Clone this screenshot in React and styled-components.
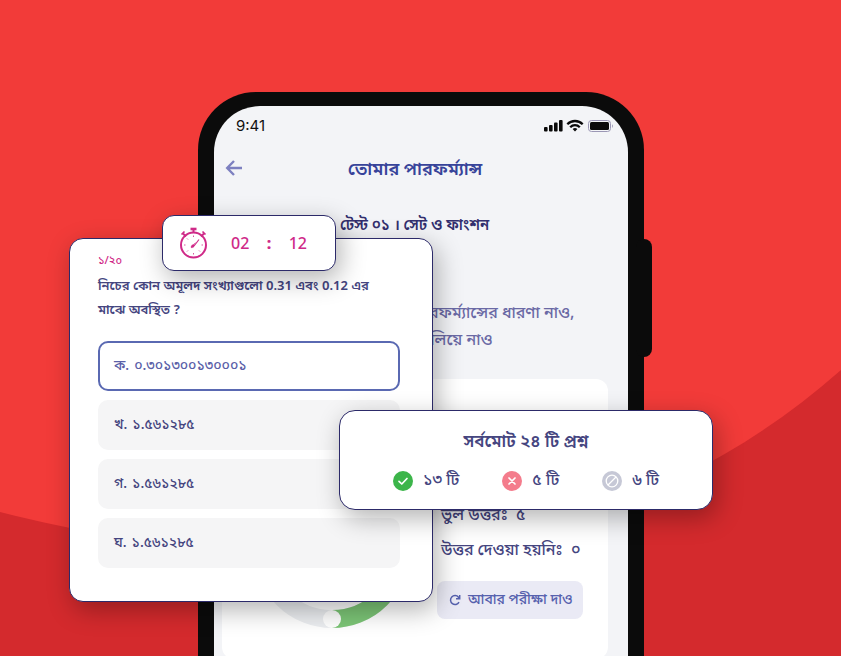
import React, { useState } from "react";
import styled, { createGlobalStyle } from "styled-components";

const GlobalStyle = createGlobalStyle`
  *, *::before, *::after { box-sizing: border-box; }
  body {
    margin: 0;
    font-family: "Noto Sans Bengali", "Hind Siliguri", "Noto Sans", sans-serif;
    color: #45457f;
  }
  h1, h2, p, ul, dl, dd, fieldset { margin: 0; padding: 0; border: 0; }
  button { font: inherit; border: 0; cursor: pointer; }
`;

const Scene = styled.main`
  position: relative;
  display: grid;
  grid-template-columns: minmax(0, 198fr) 446px minmax(0, 197fr);
  height: 100vh;
  overflow: hidden;
  background: #d42a2d;
`;

const Backdrop = styled.svg`
  position: absolute;
  inset: 0;
  width: 100%;
  height: 100%;
`;

const Stage = styled.div`
  position: relative;
  grid-column: 2;
  padding-top: 92px;
`;

const Phone = styled.section`
  position: relative;
  padding: 14px 16px 0;
  background: #0b0b0b;
  border-radius: 58px 58px 0 0;
`;

const SideKey = styled.span`
  position: absolute;
  top: 147px;
  right: -8px;
  width: 16px;
  height: 118px;
  border-radius: 8px;
  background: #0b0b0b;
`;

const Screen = styled.div`
  position: relative;
  display: flex;
  flex-direction: column;
  padding: 8px 20px 0 8px;
  min-height: 600px;
  background: #f3f4f7;
  border-radius: 46px 46px 0 0;
`;

const StatusBar = styled.div`
  display: flex;
  align-items: center;
  gap: 5px;
  height: 24px;
  padding-left: 14px;
  margin-right: -6px;
  color: #111;
  font: 15px/24px Inter, "Noto Sans", sans-serif;
  svg { display: block; }
`;

const Clock = styled.time`
  flex: 1;
`;

const TitleBar = styled.header`
  display: grid;
  grid-template-columns: 24px 1fr 24px;
  align-items: center;
  margin-top: 12px;
  height: 32px;
`;

const BackButton = styled.button`
  display: grid;
  place-items: center;
  padding: 0;
  width: 24px;
  height: 24px;
  background: none;
  color: #7d80c0;
`;

const Title = styled.h1`
  padding-top: 4px;
  text-align: center;
  font-size: 18px;
  line-height: 32px;
  font-weight: 600;
  color: #37439a;
  white-space: nowrap;
`;

const TestName = styled.h2`
  margin: 28px 0 0 118px;
  font-size: 15px;
  line-height: 32px;
  font-weight: 600;
  color: #322f6e;
  white-space: nowrap;
`;

const Advice = styled.p`
  display: flex;
  flex-direction: column;
  margin: 59px 0 0 191px;
  font-size: 16px;
  line-height: 27px;
  font-weight: 500;
  color: #6a69a5;
  white-space: nowrap;
`;

const ResultCard = styled.section`
  display: grid;
  grid-template-columns: 1fr 171px;
  margin-top: 24px;
  height: 280px;
  padding-top: 93px;
  border-radius: 12px;
  background: #fff;
`;

const Donut = styled.svg`
  display: block;
  margin-left: 32px;
`;

const Facts = styled.div`
  display: flex;
  flex-direction: column;
  align-items: flex-start;
  padding-top: 27px;
`;

const Fact = styled.p`
  margin-left: 4px;
  font-size: 16px;
  line-height: 35px;
  font-weight: 500;
  white-space: pre;
`;

const RetryButton = styled.button`
  display: flex;
  align-items: center;
  gap: 7px;
  height: 38px;
  margin-top: 12px;
  padding: 0 10px 0 12px;
  border-radius: 8px;
  background: #eaeaf5;
  color: #5661ae;
  font-size: 14px;
  font-weight: 500;
  white-space: nowrap;
`;

const FloatingCard = styled.section`
  position: absolute;
  border: 1px solid #2c2a69;
  background: #fff;
  box-shadow: 4px 8px 26px rgba(0, 0, 0, 0.3);
`;

const QuestionCard = styled(FloatingCard)`
  top: 238px;
  left: -129px;
  width: 364px;
  padding: 12px 32px 33px 28px;
  border-radius: 14px;
`;

const Progress = styled.p`
  font-size: 11px;
  line-height: 20px;
  font-weight: 500;
  color: #cf2a88;
`;

const Question = styled.legend`
  padding: 4px 20px 0 0;
  font-size: 13px;
  line-height: 24px;
  font-weight: 600;
`;

const Options = styled.div`
  display: flex;
  flex-direction: column;
  gap: 9px;
  margin-top: 18px;
`;

const Option = styled.label`
  display: flex;
  align-items: center;
  gap: 5px;
  height: 50px;
  padding: 1px 14px 0;
  border: 2px solid #f5f5f6;
  border-radius: 10px;
  background: #f5f5f6;
  font-size: 14px;
  font-weight: 500;
  cursor: pointer;

  &:has(input:checked) {
    border-color: #5a69b2;
    background: #fff;
    color: #5a60a8;
  }
`;

const HiddenRadio = styled.input`
  position: absolute;
  opacity: 0;
  width: 1px;
  height: 1px;
  margin: 0;
`;

const TimerCard = styled(FloatingCard)`
  top: 215px;
  left: -36px;
  display: flex;
  align-items: center;
  width: 174px;
  height: 56px;
  padding: 0 28px 0 16px;
  border-radius: 12px;
  color: #cf2a88;
`;

const Countdown = styled.time`
  display: flex;
  flex: 1;
  justify-content: space-between;
  margin-left: 22px;
  font: 500 16px/24px "Noto Sans", sans-serif;
`;

const Colon = styled.span`
  font-weight: 800;
`;

const SummaryCard = styled(FloatingCard)`
  top: 410px;
  left: 141px;
  width: 374px;
  height: 100px;
  padding-top: 16px;
  border-radius: 16px;
`;

const SummaryTitle = styled.h2`
  text-align: center;
  font-size: 17px;
  line-height: 32px;
  font-weight: 600;
`;

const Scores = styled.ul`
  display: flex;
  justify-content: center;
  gap: 43px;
  margin-top: 6px;
  list-style: none;
`;

const Score = styled.li`
  display: flex;
  align-items: center;
  gap: 10px;
  font-size: 16px;
  line-height: 32px;
  font-weight: 500;
`;

const OPTIONS = [
  { key: "ক", value: "০.৩০১৩০০১৩০০০১" },
  { key: "খ", value: "১.৫৬১২৮৫" },
  { key: "গ", value: "১.৫৬১২৮৫" },
  { key: "ঘ", value: "১.৫৬১২৮৫" },
];

function StatusIcons() {
  return (
    <svg width="70" height="14" viewBox="0 0 70 14" fill="#0a0a0a" aria-hidden="true">
      <rect x="0" y="8" width="3.6" height="4.5" rx="1" />
      <rect x="5" y="6" width="3.6" height="6.5" rx="1" />
      <rect x="10" y="3.5" width="3.6" height="9" rx="1" />
      <rect x="15" y="1" width="3.6" height="11.5" rx="1" />
      <g fill="none" stroke="#0a0a0a" strokeWidth="2.3">
        <path d="M23.3 5.2a10.9 10.9 0 0 1 15.4 0" />
        <path d="M26.2 8.2a6.8 6.8 0 0 1 9.6 0" />
      </g>
      <path d="M28.6 10.1a3.5 3.5 0 0 1 4.8 0L31 12.6z" />
      <rect x="44.5" y="1.5" width="22" height="11" rx="3" fill="none" stroke="#9b97b5" />
      <rect x="46" y="3" width="19" height="8" rx="1.5" />
      <path d="M68 5.3v3.6c1.2-.6 1.2-3 0-3.6z" fill="#9b97b5" />
    </svg>
  );
}

function Stopwatch() {
  return (
    <svg width="30" height="32" viewBox="0 0 30 32" fill="none" stroke="#cf2a88" aria-hidden="true">
      <circle cx="14.5" cy="18" r="12.5" strokeWidth="2" />
      <path d="M11.5 2h6" strokeWidth="2.6" />
      <path d="M14.5 2v4M4 6.5l3 3M25 6.5l-3 3" strokeWidth="2" />
      <path d="M2.5 7.5l3-3M26.5 7.5l-3-3" strokeWidth="1.6" />
      <path d="M14.5 8.5V10M14.5 26v1.5M5 18h1.5M22.5 18H24M8 11.5l1 1M8 24.5l1-1M21 24.5l-1-1" strokeWidth=".8" />
      <path d="M20 12.5l-5 6.5" strokeWidth="1.2" />
      <path d="M17 15l-5.5 5 1.5 1.2z" fill="#cf2a88" stroke="none" />
      <circle cx="13.8" cy="18.9" r="1.5" fill="#cf2a88" stroke="none" />
    </svg>
  );
}

function ScoreIcon({ kind }) {
  const fill = { right: "#3cb54a", wrong: "#f47c8c", skipped: "#c6c8d6" }[kind];
  return (
    <svg width="20" height="20" viewBox="0 0 20 20" fill="none" stroke="#fff" strokeWidth="1.7" strokeLinecap="round" strokeLinejoin="round" aria-hidden="true">
      <circle cx="10" cy="10" r="10" fill={fill} stroke="none" />
      {kind === "right" && <path d="M6 10.3l2.8 2.7L14 7.5" />}
      {kind === "wrong" && <path d="M7 7l6 6M13 7l-6 6" />}
      {kind === "skipped" && (
        <>
          <circle cx="10" cy="10" r="5.8" strokeWidth="1.3" />
          <path d="M6.5 13.5l7-7" strokeWidth="1.3" />
        </>
      )}
    </svg>
  );
}

export default function App() {
  const [selected, setSelected] = useState(0);
  return (
    <Scene>
      <GlobalStyle />
      <Backdrop viewBox="0 0 841 656" preserveAspectRatio="none" aria-hidden="true">
        <path d="M0 0H841V370C580 600 250 575 0 512Z" fill="#f23b39" />
      </Backdrop>
      <Stage>
        <Phone>
          <SideKey />
          <Screen>
            <StatusBar>
              <Clock>9:41</Clock>
              <StatusIcons />
            </StatusBar>
            <TitleBar>
              <BackButton aria-label="Back">
                <svg width="18" height="16" viewBox="0 0 18 16" fill="none" stroke="currentColor" strokeWidth="2.4" aria-hidden="true">
                  <path d="M17 8H2.5M9 1L2.2 8 9 15" />
                </svg>
              </BackButton>
              <Title>তোমার পারফর্ম্যান্স</Title>
            </TitleBar>
            <TestName>টেস্ট ০১ । সেট ও ফাংশন</TestName>
            <Advice>
              <span>পারফর্ম্যান্সের ধারণা নাও,</span>
              <span>ঝালিয়ে নাও</span>
            </Advice>
            <ResultCard>
              <Donut width="156" height="156" viewBox="0 0 156 156" fill="none" aria-hidden="true">
                <circle cx="78" cy="78" r="69" stroke="#eceef1" strokeWidth="18" />
                <path d="M78 147A69 69 0 0 0 147 78" stroke="#7cc576" strokeWidth="18" />
                <circle cx="78" cy="147" r="9" fill="#fff" />
              </Donut>
              <Facts>
                <Fact>ভুল উত্তরঃ  ৫</Fact>
                <Fact>উত্তর দেওয়া হয়নিঃ  ০</Fact>
                <RetryButton>
                  <svg width="12" height="12" viewBox="0 0 12 12" fill="none" stroke="currentColor" strokeWidth="1.5" aria-hidden="true">
                    <path d="M10 8.2A4.5 4.5 0 1 1 9.5 3.2L10.5 4.5M10.7 1v3.7H7" />
                  </svg>
                  আবার পরীক্ষা দাও
                </RetryButton>
              </Facts>
            </ResultCard>
          </Screen>
        </Phone>
        <QuestionCard>
          <Progress>১/২০</Progress>
          <fieldset>
            <Question>নিচের কোন অমূলদ সংখ্যাগুলো 0.31 এবং 0.12 এর মাঝে অবস্থিত ?</Question>
            <Options>
              {OPTIONS.map((o, i) => (
                <Option key={o.key}>
                  <HiddenRadio type="radio" name="answer" checked={selected === i} onChange={() => setSelected(i)} />
                  <span>{o.key}.</span>
                  <span>{o.value}</span>
                </Option>
              ))}
            </Options>
          </fieldset>
        </QuestionCard>
        <TimerCard>
          <Stopwatch />
          <Countdown>
            <span>02</span>
            <Colon>:</Colon>
            <span>12</span>
          </Countdown>
        </TimerCard>
        <SummaryCard>
          <SummaryTitle>সর্বমোট ২৪ টি প্রশ্ন</SummaryTitle>
          <Scores>
            <Score><ScoreIcon kind="right" />১৩ টি</Score>
            <Score><ScoreIcon kind="wrong" />৫ টি</Score>
            <Score><ScoreIcon kind="skipped" />৬ টি</Score>
          </Scores>
        </SummaryCard>
      </Stage>
    </Scene>
  );
}
